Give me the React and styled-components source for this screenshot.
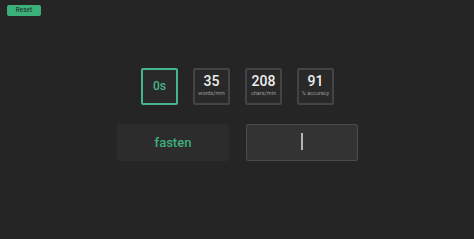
import styled, { createGlobalStyle } from "styled-components";

const GlobalStyle = createGlobalStyle`
    html, body {
        margin: 0;
        padding: 0;
        background: #252525;
        font-family: Roboto, "Noto Sans", sans-serif;
    }
`;

const StyledPage = styled.div`
    width: 474px;
    height: 239px;
    background: #252525;
    display: flex;
    flex-direction: column;
    box-sizing: border-box;
    padding: 5px 7px;
`;

const StyledResetButton = styled.button`
    align-self: flex-start;
    width: 34px;
    height: 11px;
    padding: 0;
    border: none;
    border-radius: 2px;
    background: #3bb07a;
    color: #1d2a22;
    font-family: Roboto, sans-serif;
    font-size: 6.5px;
    line-height: 11px;
    cursor: pointer;
`;

const StyledStatsRow = styled.div`
    display: flex;
    justify-content: center;
    gap: 15px;
    margin-top: 52px;
    padding-left: 1px;
`;

const StyledStatBox = styled.div`
    width: 37px;
    height: 37px;
    box-sizing: border-box;
    border: 2px solid ${({$active}) => ($active ? "#45b58b" : "#444444")};
    border-radius: 2px;
    background: #292929;
    display: flex;
    flex-direction: column;
    align-items: center;
    justify-content: center;
    gap: 1px;
`;

const StyledStatValue = styled.span`
    font-size: ${({$active}) => ($active ? "12px" : "14px")};
    font-weight: 500;
    color: ${({$active}) => ($active ? "#45b58b" : "#eeeeee")};
    line-height: 15px;
    margin-top: ${({$active}) => ($active ? "0" : "-2px")};
`;

const StyledStatLabel = styled.span`
    font-size: 5.5px;
    color: #9a9a9a;
    line-height: 7px;
    white-space: nowrap;
`;

const StyledTypingRow = styled.div`
    display: flex;
    justify-content: center;
    gap: 17px;
    margin-top: 19px;
    padding-left: 1px;
`;

const StyledWordBox = styled.div`
    width: 112px;
    height: 37px;
    border-radius: 2px;
    background: #2c2c2c;
    display: flex;
    align-items: center;
    justify-content: center;
    color: #3fb07d;
    font-size: 13px;
    font-weight: 500;
`;

const StyledInputBox = styled.div`
    width: 112px;
    height: 37px;
    box-sizing: border-box;
    border: 1px solid #4b4b4b;
    border-radius: 2px;
    background: #333333;
    display: flex;
    align-items: center;
    justify-content: center;
`;

const StyledCaret = styled.span`
    width: 2px;
    height: 17px;
    margin-top: -2px;
    background: #b5b5b5;
`;

const stats = [
    {value: "35", label: "words/min"},
    {value: "208", label: "chars/min"},
    {value: "91", label: "% accuracy"},
];

function App() {
    return (
        <>
            <GlobalStyle/>
            <StyledPage>
                <StyledResetButton>Reset</StyledResetButton>
                <StyledStatsRow>
                    <StyledStatBox $active>
                        <StyledStatValue $active>0s</StyledStatValue>
                    </StyledStatBox>
                    {stats.map((stat) => (
                        <StyledStatBox key={stat.label}>
                            <StyledStatValue>{stat.value}</StyledStatValue>
                            <StyledStatLabel>{stat.label}</StyledStatLabel>
                        </StyledStatBox>
                    ))}
                </StyledStatsRow>
                <StyledTypingRow>
                    <StyledWordBox>fasten</StyledWordBox>
                    <StyledInputBox>
                        <StyledCaret/>
                    </StyledInputBox>
                </StyledTypingRow>
            </StyledPage>
        </>
    );
}

export default App;
